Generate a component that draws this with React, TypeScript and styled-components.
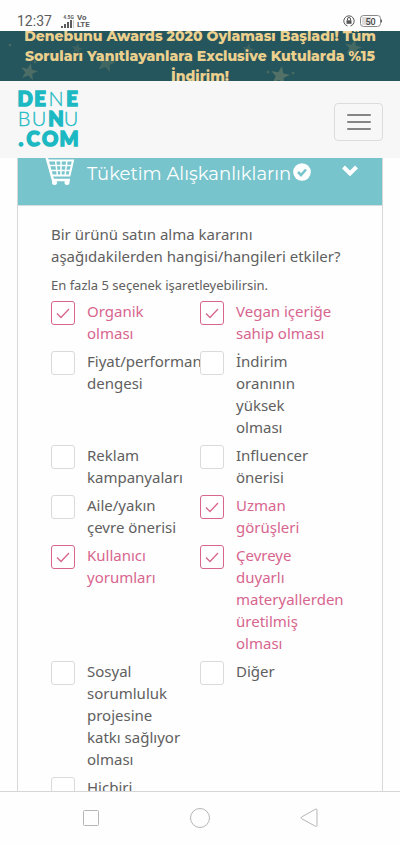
import React from 'react';
import styled, { createGlobalStyle } from 'styled-components';

const GlobalStyle = createGlobalStyle`
  *, *::before, *::after { box-sizing: border-box; }
  body {
    margin: 0;
    background: #fefefe;
    color: #606060;
    font-family: "Noto Sans", "Open Sans", sans-serif;
  }
`;

const Screen = styled.div`
  display: flex;
  flex-direction: column;
  height: 100vh;
  overflow: hidden;
`;

const StatusBar = styled.div`
  display: flex;
  flex: none;
  align-items: flex-end;
  justify-content: space-between;
  height: 31px;
  padding: 0 17px 2px 17px;
  color: #5c5c5c;
  font-family: Roboto, sans-serif;
`;

const StatusGroup = styled.div<{ $gap: number }>`
  display: flex;
  align-items: center;
  gap: ${(p) => p.$gap}px;
  height: 16px;
`;

const Clock = styled.span`
  font-size: 14px;
  line-height: 16px;
`;

const Signal = styled.div`
  display: flex;
  flex-direction: column;
  align-items: flex-end;
  width: 19px;
  font-size: 5px;
  font-weight: 700;
  line-height: 5px;
`;

const Volte = styled.span`
  font-size: 8px;
  font-weight: 700;
  line-height: 7px;
`;

const Banner = styled.div`
  position: relative;
  display: flex;
  flex: none;
  align-items: center;
  justify-content: center;
  height: 50px;
  overflow: hidden;
  background: #25555d;
`;

const Stars = styled.svg`
  position: absolute;
  inset: 0;
  width: 100%;
  height: 100%;
`;

const BannerText = styled.p`
  position: relative;
  flex: none;
  width: 100%;
  margin: 0;
  padding: 0 12px;
  color: #ecd08d;
  font: 800 14px/20px Montserrat, Inter, sans-serif;
  text-align: center;
`;

const Header = styled.header`
  display: flex;
  flex: none;
  align-items: center;
  justify-content: space-between;
  height: 77px;
  padding: 0 17px;
  background: #f7f7f7;
`;

const Logo = styled.a`
  display: block;
  margin-top: 2px;
  color: #1db9c3;
  text-decoration: none;
`;

const LogoText = styled.text<{ $heavy?: boolean }>`
  fill: #1db9c3;
  stroke: #1db9c3;
  stroke-width: ${(p) => (p.$heavy ? 1.5 : 0.3)};
  font-family: Lato, sans-serif;
  font-size: 20px;
  font-weight: ${(p) => (p.$heavy ? 900 : 300)};
`;

const MenuButton = styled.button`
  display: flex;
  flex-direction: column;
  align-items: center;
  justify-content: center;
  gap: 5px;
  width: 49px;
  height: 38px;
  margin-top: 4px;
  padding: 0;
  border: 1px solid #dcdcdc;
  border-radius: 4px;
  background: transparent;
`;

const MenuBar = styled.span`
  width: 24px;
  height: 2px;
  border-radius: 1px;
  background: #858585;
`;

const Main = styled.main`
  flex: 1;
  min-height: 0;
  overflow: hidden;
`;

const Panel = styled.section`
  margin: 0 17px;
  border: solid #d8d8d8;
  border-width: 0 1px;
`;

const PanelHeader = styled.button`
  display: flex;
  align-items: flex-start;
  width: 100%;
  height: 48px;
  padding: 0 24px 0 27px;
  border: 0;
  border-bottom: 1px solid #d8dede;
  background: #78c4cc;
  color: #fff;
  text-align: left;
`;

const PanelTitle = styled.span`
  flex: 1;
  display: flex;
  align-items: center;
  gap: 2px;
  margin-left: 12px;
  padding-top: 4px;
  font: 400 18px/24px Montserrat, Inter, sans-serif;
  white-space: nowrap;
`;

const TickBadge = styled.svg`
  margin-bottom: 4px;
`;

const Chevron = styled.svg`
  margin-top: 7px;
`;

const Question = styled.fieldset`
  min-width: 0;
  margin: 0;
  padding: 17px 33px;
  border: 0;
`;

const Legend = styled.legend`
  float: left;
  width: 100%;
  padding: 0;
  font-size: 15px;
  line-height: 22px;
`;

const Hint = styled.p`
  clear: both;
  margin: 0 0 5px;
  padding-top: 8px;
  font-size: 13px;
  line-height: 20px;
`;

const Options = styled.div`
  display: grid;
  grid-template-columns: repeat(2, minmax(0, 1fr));
  row-gap: 6px;
`;

const Option = styled.label<{ $checked: boolean; $clip: boolean }>`
  display: flex;
  align-items: flex-start;
  gap: 12px;
  padding-right: 16px;
  overflow-x: ${(p) => (p.$clip ? 'clip' : 'visible')};
  color: ${(p) => (p.$checked ? '#d7658e' : '#606060')};
  font-size: 15px;
  line-height: 22px;
`;

const OptionText = styled.span`
  flex: 1;
  min-width: 0;
`;

const TickBox = styled.span`
  display: grid;
  flex: none;
  place-items: center;
  width: 24px;
  height: 24px;
  margin-top: 1px;

  > * { grid-area: 1 / 1; }
  svg { pointer-events: none; visibility: hidden; }
  input:checked + svg { visibility: visible; }
`;

const Tick = styled.input`
  appearance: none;
  width: 24px;
  height: 24px;
  margin: 0;
  border: 1px solid #dadada;
  border-radius: 3px;
  background: #fff;

  &:checked { border-color: #d7658e; }
`;

const NavBar = styled.nav`
  display: grid;
  flex: none;
  grid-template-columns: repeat(3, 109px);
  justify-content: center;
  place-items: center;
  height: 53px;
  border-top: 1px solid #d6d6d6;
  background: #fefefe;
`;

const NavButton = styled.button`
  display: flex;
  padding: 0;
  border: 0;
  background: none;
`;

const star = 'M0-10 2.5-3.3 9.5-3 4 1.2 6 8 0 4-6 8-4 1.2-9.5-3-2.5-3.3Z';

const starField = [
  { x: 29, y: 41, s: 0.9, o: 0.3 },
  { x: 77, y: 18, s: 0.6, o: 0.18 },
  { x: 106, y: 32, s: 1, o: 0.22 },
  { x: 248, y: 19, s: 0.7, o: 0.18 },
  { x: 280, y: 45, s: 1, o: 0.35 },
  { x: 310, y: 26, s: 0.6, o: 0.18 },
  { x: 353, y: 17, s: 0.9, o: 0.25 },
];

const starDots = [
  { x: 10, y: 14 },
  { x: 35, y: 31 },
  { x: 268, y: 41 },
  { x: 293, y: 42 },
  { x: 190, y: 30 },
];

const options = [
  { text: 'Organik olması', checked: true },
  { text: 'Vegan içeriğe sahip olması', checked: true },
  { text: 'Fiyat/performans dengesi', checked: false },
  { text: 'İndirim oranının yüksek olması', checked: false },
  { text: 'Reklam kampanyaları', checked: false },
  { text: 'Influencer önerisi', checked: false },
  { text: 'Aile/yakın çevre önerisi', checked: false },
  { text: 'Uzman görüşleri', checked: true },
  { text: 'Kullanıcı yorumları', checked: true },
  { text: 'Çevreye duyarlı materyallerden üretilmiş olması', checked: true },
  { text: 'Sosyal sorumluluk projesine katkı sağlıyor olması', checked: false },
  { text: 'Diğer', checked: false },
  { text: 'Hiçbiri', checked: false },
];

const logoLetters = [
  { c: 'D', x: 8, y: 17, heavy: true },
  { c: 'E', x: 23, y: 17, heavy: true },
  { c: 'N', x: 39, y: 17, heavy: false },
  { c: 'E', x: 55, y: 17, heavy: true },
  { c: 'B', x: 7, y: 37, heavy: false },
  { c: 'U', x: 22, y: 37, heavy: false },
  { c: 'N', x: 39, y: 37, heavy: true },
  { c: 'U', x: 54, y: 37, heavy: false },
  { c: '.', x: 4, y: 57, heavy: true },
  { c: 'C', x: 16, y: 57, heavy: true },
  { c: 'O', x: 33, y: 57, heavy: true },
  { c: 'M', x: 52, y: 57, heavy: true },
];

function OptionItem({ text, checked: initial, clip }: { text: string; checked: boolean; clip: boolean }) {
  const [checked, setChecked] = React.useState(initial);
  return (
    <Option $checked={checked} $clip={clip}>
      <TickBox>
        <Tick type="checkbox" checked={checked} onChange={(e) => setChecked(e.target.checked)} />
        <svg width="14" height="24" viewBox="0 0 14 24" fill="none" stroke="#d7658e" strokeWidth="1.3">
          <path d="M1 12.5 5 16.5 13 8" />
        </svg>
      </TickBox>
      <OptionText>{text}</OptionText>
    </Option>
  );
}

export default function App() {
  return (
    <Screen lang="tr">
      <GlobalStyle />
      <StatusBar>
        <StatusGroup $gap={3}>
          <Clock>12:37</Clock>
          <Signal>
            <span>4.5G</span>
            <svg width="13" height="8" viewBox="0 0 13 8" fill="#5c5c5c">
              <path d="M0 6h2v2H0zM3 4h2v4H3zM6 2h2v6H6z" />
              <path d="M9 0h2v8H9z" />
              <path d="M12 0h1v8h-1z" fill="#ccc" />
            </svg>
          </Signal>
          <Volte>
            Vo
            <br />
            LTE
          </Volte>
        </StatusGroup>
        <StatusGroup $gap={5}>
          <svg width="12" height="12" viewBox="0 0 12 12" fill="none" stroke="#555">
            <path d="M4.5 11A5.2 5.2 0 1 1 7.5 11" />
            <path d="M4.5 5.5V4a1.5 1.5 0 0 1 3 0v1.5" />
            <path d="M3.5 5.3h5v3.5h-5z" fill="#555" stroke="none" />
          </svg>
          <svg width="23" height="13" viewBox="0 0 23 13">
            <rect x=".5" y=".5" width="20" height="11" rx="3" fill="#fff" stroke="#888" />
            <path d="M3 2h8v8H3a1 1 0 0 1-1-1V3a1 1 0 0 1 1-1Z" fill="#ddd" />
            <path d="M21 4.5h1v3h-1z" fill="#666" />
            <text x="10.5" y="9.5" textAnchor="middle" fontFamily="Roboto, sans-serif" fontSize="9" fontWeight="500" fill="#444">50</text>
          </svg>
        </StatusGroup>
      </StatusBar>

      <Banner>
        <Stars viewBox="0 0 400 50" preserveAspectRatio="xMidYMid slice" fill="#a9a779" aria-hidden="true">
          {starField.map((s) => (
            <path key={s.x} d={star} opacity={s.o} transform={`translate(${s.x} ${s.y}) rotate(12) scale(${s.s})`} />
          ))}
          {starDots.map((d) => (
            <circle key={d.x} cx={d.x} cy={d.y} r="1.5" opacity=".25" />
          ))}
        </Stars>
        <BannerText>
          Denebunu Awards 2020 Oylaması Başladı! Tüm Soruları Yanıtlayanlara Exclusive Kutularda %15 İndirim!
        </BannerText>
      </Banner>

      <Header>
        <Logo href="#" aria-label="Denebunu.com">
          <svg width="64" height="58" viewBox="0 0 64 58">
            {logoLetters.map((l) => (
              <LogoText key={`${l.x}-${l.y}`} x={l.x} y={l.y} $heavy={l.heavy} textAnchor="middle">
                {l.c}
              </LogoText>
            ))}
          </svg>
        </Logo>
        <MenuButton type="button" aria-label="Menü">
          <MenuBar />
          <MenuBar />
          <MenuBar />
        </MenuButton>
      </Header>

      <Main>
        <Panel>
          <PanelHeader type="button">
            <svg width="30" height="28" viewBox="0 0 30 28" fill="none" stroke="#fff" strokeWidth="1.5">
              <path d="M1.5-1 8 22H25" strokeWidth="2.500" />
              <path d="M2 2.500H28L24.500 17.500H6" strokeWidth="2" />
              <path d="M3 7.500H27M4 12.500H26M10.500 2 12.500 18M16 2V18M22 2 20 18" />
              <circle cx="9.500" cy="24.500" r="2.500" fill="#fff" stroke="none" />
              <circle cx="22" cy="24.500" r="2.500" fill="#fff" stroke="none" />
            </svg>
            <PanelTitle>
              Tüketim Alışkanlıkların
              <TickBadge width="18" height="18" viewBox="0 0 18 18">
                <circle cx="9" cy="9" r="8.800" fill="#fff" />
                <path d="M5 9 8 12 13 6.500" fill="none" stroke="#78c4cc" strokeWidth="2.600" />
              </TickBadge>
            </PanelTitle>
            <Chevron width="16" height="12" viewBox="0 0 16 12" fill="none" stroke="#fff" strokeWidth="4">
              <path d="M1.500 2 8 8.500 14.500 2" />
            </Chevron>
          </PanelHeader>
          <Question>
            <Legend>Bir ürünü satın alma kararını aşağıdakilerden hangisi/hangileri etkiler?</Legend>
            <Hint>En fazla 5 seçenek işaretleyebilirsin.</Hint>
            <Options>
              {options.map((o, i) => (
                <OptionItem key={o.text} text={o.text} checked={o.checked} clip={i % 2 === 0} />
              ))}
            </Options>
          </Question>
        </Panel>
      </Main>

      <NavBar aria-label="Sistem">
        <NavButton type="button" aria-label="Son uygulamalar">
          <svg width="18" height="18" viewBox="0 0 18 18" fill="none" stroke="#b5b5b5">
            <rect x="1.500" y="1.500" width="15" height="15" rx="1" />
          </svg>
        </NavButton>
        <NavButton type="button" aria-label="Ana ekran">
          <svg width="20" height="20" viewBox="0 0 20 20" fill="none" stroke="#b5b5b5">
            <circle cx="10" cy="10" r="9.500" />
          </svg>
        </NavButton>
        <NavButton type="button" aria-label="Geri">
          <svg width="18" height="20" viewBox="0 0 18 20" fill="none" stroke="#b5b5b5" strokeLinejoin="round">
            <path d="M1.500 9 15.500 1.200Q17 .5 17 2V17.500Q17 19 15.500 18.300L1.500 10.700Q.3 9.900 1.500 9Z" />
          </svg>
        </NavButton>
      </NavBar>
    </Screen>
  );
}
